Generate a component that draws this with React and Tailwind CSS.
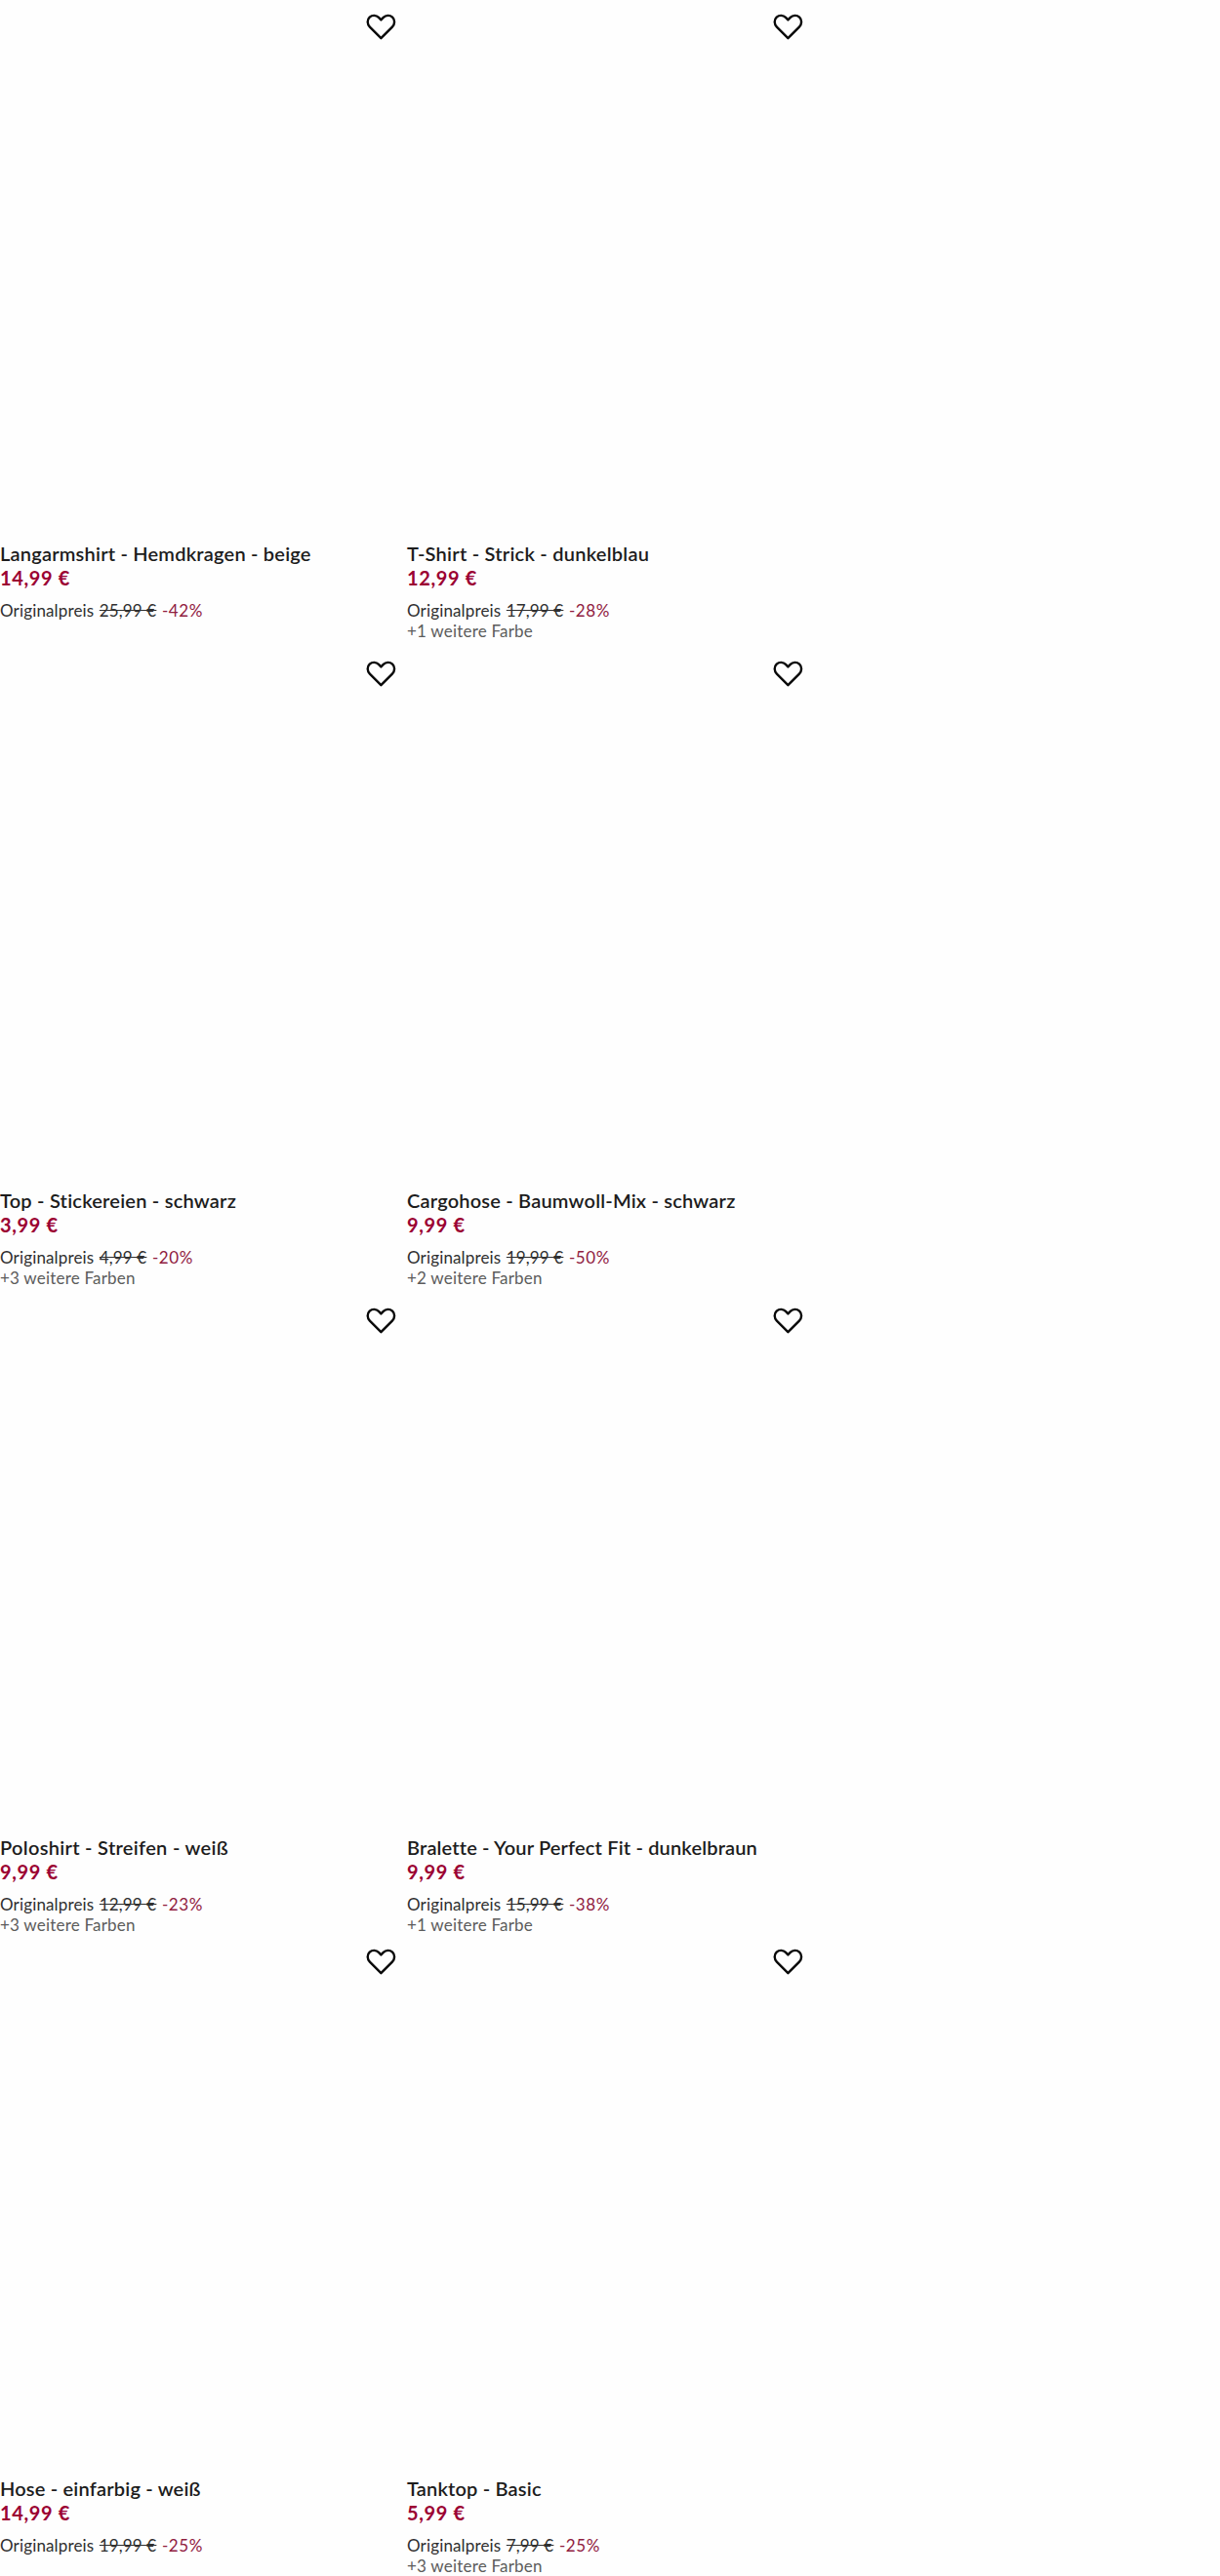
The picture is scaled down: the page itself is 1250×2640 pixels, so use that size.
import React from "react";

const rows = [
    {
        height: "h-[663px]",
        items: [
            { title: "Langarmshirt - Hemdkragen - beige", tracking: "tracking-[0.21px]", price: "14,99 €", old: "25,99 €", percent: "-42%" },
            { title: "T-Shirt - Strick - dunkelblau", tracking: "tracking-[0.24px]", price: "12,99 €", old: "17,99 €", percent: "-28%", colors: "+1 weitere Farbe" },
        ],
    },
    {
        height: "h-[663px]",
        items: [
            { title: "Top - Stickereien - schwarz", tracking: "tracking-[0.22px]", price: "3,99 €", old: "4,99 €", percent: "-20%", colors: "+3 weitere Farben" },
            { title: "Cargohose - Baumwoll-Mix - schwarz", tracking: "tracking-[0.2px]", price: "9,99 €", old: "19,99 €", percent: "-50%", colors: "+2 weitere Farben" },
        ],
    },
    {
        height: "h-[657px]",
        items: [
            { title: "Poloshirt - Streifen - weiß", tracking: "tracking-[0.31px]", price: "9,99 €", old: "12,99 €", percent: "-23%", colors: "+3 weitere Farben" },
            { title: "Bralette - Your Perfect Fit - dunkelbraun", tracking: "tracking-[0.16px]", price: "9,99 €", old: "15,99 €", percent: "-38%", colors: "+1 weitere Farbe" },
        ],
    },
    {
        height: "h-[657px]",
        items: [
            { title: "Hose - einfarbig - weiß", tracking: "tracking-[0.19px]", price: "14,99 €", old: "19,99 €", percent: "-25%" },
            { title: "Tanktop - Basic", tracking: "tracking-[0.18px]", price: "5,99 €", old: "7,99 €", percent: "-25%", colors: "+3 weitere Farben" },
        ],
    },
];

function HeartIcon() {
    return (
        <svg width="31" height="27" viewBox="0 0 31 27" fill="none" stroke="#080808" strokeWidth="2.4" strokeLinejoin="round">
            <path d="M15.4 25.2 L3.9 13.6 C1 10.6 1 6.3 3.7 3.7 C6.4 1.2 10.5 1.4 13 3.9 L15.4 6.4 L17.8 3.9 C20.3 1.4 24.4 1.2 27.1 3.7 C29.8 6.3 29.8 10.6 26.9 13.6 Z" />
        </svg>
    );
}

function ProductCard({ item }) {
    return (
        <article className="flex w-[417px] flex-col">
            {/* image area with wishlist button */}
            <div className="flex h-[555px] items-start justify-end pt-[14px] pr-[11px]">
                <button type="button" aria-label="Merken">
                    <HeartIcon />
                </button>
            </div>

            <h3 className={`text-[20px] leading-6 font-semibold whitespace-nowrap text-[#1c1c1c] ${item.tracking}`}>
                {item.title}
            </h3>
            <p className="text-[20px] leading-[26px] font-bold tracking-[0.62px] whitespace-nowrap text-[#9b0032]">
                {item.price}
            </p>
            <div className="mt-[10px] flex gap-[5.5px] text-[17px] leading-[21px] tracking-[0.15px] whitespace-nowrap text-[#303030]">
                <span>Originalpreis</span>
                <span className="line-through">{item.old}</span>
                <span className="tracking-[0.6px] text-[#90203f]">{item.percent}</span>
            </div>
            {item.colors && (
                <p className="text-[17px] leading-[21px] tracking-[0.2px] text-[#5c5c5c]">{item.colors}</p>
            )}
        </article>
    );
}

function App() {
    return (
        <main className="h-[2640px] w-full overflow-hidden bg-[#fefefe] font-['Lato',sans-serif]">
            {rows.map((row, index) => (
                <section key={index} className={`flex ${row.height}`}>
                    {row.items.map((item) => (
                        <ProductCard key={item.title} item={item} />
                    ))}
                </section>
            ))}
        </main>
    );
}

export default App;
